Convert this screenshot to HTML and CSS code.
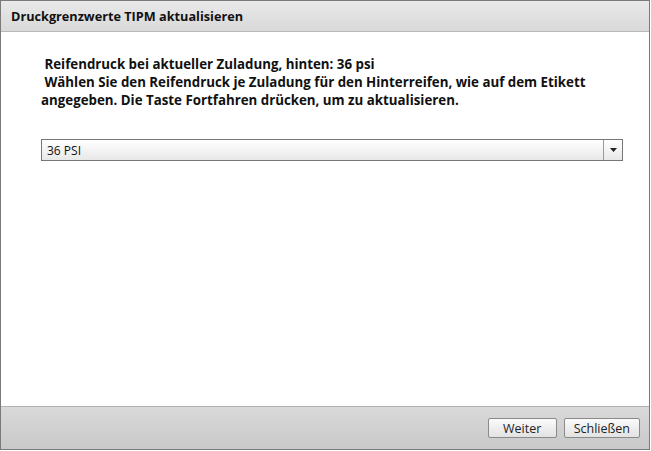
FILE: index.html
```html
<html>

<head>
    <title>Druckgrenzwerte TIPM aktualisieren</title>
    <meta name="viewport" content="width=device-width, initial-scale=1">
    <link rel="stylesheet" href="styles.css">
</head>

<body>
    <div class="dialog">
        <header class="titlebar">
            <h1>Druckgrenzwerte TIPM aktualisieren</h1>
        </header>
        <main class="content">
            <p class="message">
                &nbsp;Reifendruck bei aktueller Zuladung, hinten: 36 psi<br>
                &nbsp;Wählen Sie den Reifendruck je Zuladung für den Hinterreifen, wie auf dem Etikett
                angegeben. Die Taste Fortfahren drücken, um zu aktualisieren.
            </p>
            <div class="select">
                <span class="select-value">36 PSI</span>
                <span class="select-arrow">
                    <svg width="7" height="4" viewBox="0 0 7 4"><path d="M0 0 L7 0 L3.5 4 Z" fill="#222" /></svg>
                </span>
            </div>
        </main>
        <footer class="buttons">
            <button class="btn">Weiter</button>
            <button class="btn">Schließen</button>
        </footer>
    </div>
</body>

</html>
```

FILE: styles.css
```css
html {
    width: 100vw;
    max-width: 100%;
}

body {
    margin: 0px;
    padding: 0px;
    background: #ffffff;
    font-family: "Open Sans", "DejaVu Sans", sans-serif;
    color: #111;
}

.dialog {
    width: 648px;
    height: 448px;
    border: 1px solid #7a7a7a;
    display: flex;
    flex-direction: column;
    background: #ffffff;
}

.titlebar {
    height: 30px;
    background: linear-gradient(#e9e9e9, #d9d9d9);
    border-bottom: 1px solid #b8b8b8;
    display: flex;
    align-items: center;
    padding-left: 10px;
}

.titlebar h1 {
    margin: 0px;
    font-size: 12.7px;
    font-weight: bold;
}

.content {
    flex: 1;
    padding: 23px 26px 0px 40px;
}

.message {
    margin: 0px;
    font-size: 13.3px;
    font-weight: bold;
    line-height: 18px;
}

.select {
    margin-top: 30px;
    height: 20px;
    border: 1px solid #777;
    background: linear-gradient(#ffffff, #e8e8e8);
    display: flex;
    align-items: center;
    font-size: 12px;
}

.select-value {
    flex: 1;
    padding-left: 5px;
}

.select-arrow {
    width: 18px;
    height: 100%;
    border-left: 1px solid #999;
    display: flex;
    align-items: center;
    justify-content: center;
}

.buttons {
    height: 42px;
    background: linear-gradient(#d9d9d9, #c9c9c9);
    border-top: 1px solid #b0b0b0;
    display: flex;
    align-items: center;
    justify-content: flex-end;
    gap: 7px;
    padding-right: 9px;
}

.btn {
    height: 20px;
    min-width: 69px;
    padding: 0px 9px;
    font-family: "Open Sans", "DejaVu Sans", sans-serif;
    font-size: 12.5px;
    color: #222;
    border: 1px solid #8a8a8a;
    border-radius: 2px;
    background: linear-gradient(#fbfbfb, #e2e2e2);
}
```
